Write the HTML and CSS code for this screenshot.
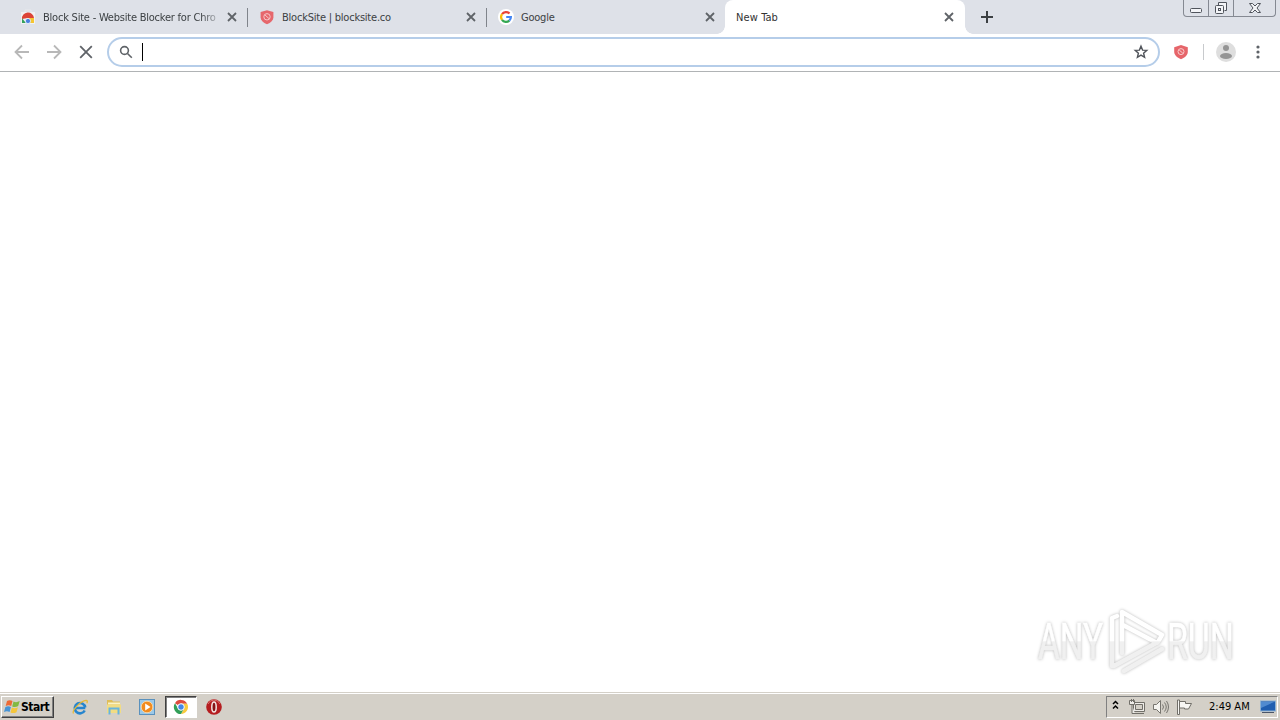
FILE: index.html
```html
<!DOCTYPE html>
<html lang="en">
<head>
    <meta charset="UTF-8">
    <meta name="viewport" content="width=device-width, initial-scale=1.0">
    <title>New Tab</title>
    <link rel="stylesheet" href="styles.css">
</head>
<body>
    <div class="tab-strip">
        <div class="tab">
            <svg class="favicon" viewBox="0 0 16 16">
                <path d="M1 3h14v12H1z" fill="#f1f1f2"/>
                <path d="M5 3V1h6v2" fill="none" stroke="#e8e9ec"/>
                <path d="M2 10a6 6 0 0 1 12-1H8z" fill="#dc4437"/>
                <path d="M2 9.200 6 14H2z" fill="#35a25a"/>
                <path d="M8.500 9H14v5h-4z" fill="#f5c532"/>
                <circle cx="8" cy="12" r="2.600" fill="#4a80df" stroke="#fff" stroke-width=".7"/>
            </svg>
            <span class="tab-title fade">Block Site - Website Blocker for Chro</span>
            <svg class="close" viewBox="0 0 10 10"><path d="M1 1l8 8M9 1L1 9"/></svg>
        </div>
        <div class="tab">
            <svg class="favicon" viewBox="0 0 16 16">
                <path d="M8 1.200 14.400 3v5.200c0 3-2.500 5.400-6.400 7-3.900-1.600-6.400-4-6.400-7V3z" fill="#e6676c"/>
                <circle cx="8" cy="7.800" r="3.200" fill="none" stroke="#f8c5c7"/>
                <path d="M6 6l4 3.600" stroke="#f8c5c7"/>
            </svg>
            <span class="tab-title">BlockSite | blocksite.co</span>
            <svg class="close" viewBox="0 0 10 10"><path d="M1 1l8 8M9 1L1 9"/></svg>
        </div>
        <div class="tab last">
            <svg class="favicon" viewBox="0 0 16 16">
                <circle cx="8" cy="8" r="8" fill="#fff"/>
                <g fill="none" stroke-width="2.200">
                    <path d="M4 5.200A4.900 4.900 0 0 1 11.500 4.500" stroke="#ea4335"/>
                    <path d="M4 5.200a4.900 4.900 0 0 0 0 5.600" stroke="#fbbc05"/>
                    <path d="M4 10.800a4.900 4.900 0 0 0 7.300.8" stroke="#34a853"/>
                    <path d="M8.200 8h4.700a4.900 4.900 0 0 1-1.600 3.600" stroke="#4285f4"/>
                </g>
            </svg>
            <span class="tab-title">Google</span>
            <svg class="close" viewBox="0 0 10 10"><path d="M1 1l8 8M9 1L1 9"/></svg>
        </div>
        <div class="tab active">
            <span class="tab-title">New Tab</span>
            <svg class="close" viewBox="0 0 10 10"><path d="M1 1l8 8M9 1L1 9"/></svg>
        </div>
        <svg class="new-tab" viewBox="0 0 12 12"><path d="M6 0v12M0 6h12"/></svg>
        <div class="window-buttons">
            <span class="win-btn min">
                <svg width="14" height="16" viewBox="0 0 14 16"><rect x="1.500" y="8.500" width="11" height="4" rx="1"/></svg>
            </span>
            <span class="win-btn restore">
                <svg width="14" height="16" viewBox="0 0 14 16">
                    <path d="M4.500 5.500v-3h8v8h-2"/>
                    <rect x="1.500" y="5.500" width="8" height="8" rx="1"/>
                    <rect x="4.500" y="8.500" width="2" height="2"/>
                </svg>
            </span>
            <span class="win-btn shut">
                <svg width="14" height="16" viewBox="0 0 14 16"><path d="M1.500 3.500h3L7 6l2.500-2.500h3L9 8l3.500 4.500h-3L7 10l-2.500 2.500h-3L5 8z"/></svg>
            </span>
        </div>
    </div>

    <div class="toolbar">
        <svg class="nav" viewBox="0 0 16 16"><path d="M15 8H2M8 1.500 1.500 8 8 14.500"/></svg>
        <svg class="nav" viewBox="0 0 16 16"><path d="M1 8h13M8 1.500 14.500 8 8 14.500"/></svg>
        <svg class="nav stop" viewBox="0 0 16 16"><path d="M2.200 2.200l11.600 11.600M13.800 2.200 2.200 13.800"/></svg>
        <div class="omnibox">
            <svg class="search" viewBox="0 0 14 14"><circle cx="5.500" cy="5.500" r="3.900"/><path d="M8.500 8.500l4.300 4.300"/></svg>
            <span class="caret"></span>
            <svg class="star" viewBox="0 0 16 16"><path d="M8 2.200l1.600 3.900 4.200.3-3.200 2.800 1 4.100L8 11.100l-3.600 2.200 1-4.100-3.200-2.800 4.200-.3z"/></svg>
        </div>
        <svg class="shield" viewBox="0 0 16 16">
            <path d="M8 1 14.800 3.200v4.500c0 3.200-2.600 5.600-6.800 7.500-4.200-1.900-6.800-4.300-6.800-7.500V3.200z" fill="#e6656a"/>
            <circle cx="8" cy="7.600" r="3" fill="none" stroke="#f9cccd"/>
            <path d="M6.200 6l3.600 3.200" stroke="#f9cccd"/>
        </svg>
        <span class="divider"></span>
        <svg class="avatar" viewBox="0 0 20 20">
            <circle cx="10" cy="10" r="10" fill="#dedede"/>
            <circle cx="10" cy="6" r="3" fill="#949494"/>
            <ellipse cx="10" cy="14" rx="6" ry="3" fill="#949494"/>
        </svg>
        <svg class="menu" viewBox="0 0 4 14"><circle cx="2" cy="2" r="1.600"/><circle cx="2" cy="7" r="1.600"/><circle cx="2" cy="12" r="1.600"/></svg>
    </div>

    <div class="page">
        <svg class="watermark" viewBox="0 0 210 72">
            <defs>
                <linearGradient id="fade" x1="0" y1="0" x2="0" y2="72" gradientUnits="userSpaceOnUse">
                    <stop offset=".5" stop-color="#fff"/>
                    <stop offset=".51" stop-color="#f0f0f0"/>
                </linearGradient>
            </defs>
            <text x="7" y="54" textLength="65" lengthAdjust="spacingAndGlyphs">ANY</text>
            <g class="mark">
                <path d="M86 11l-5 2v48M91 48V7l40 23M92 20l34 18M83 61l44-24 4-7M93 66l38-22"/>
            </g>
            <text x="136" y="54" textLength="67" lengthAdjust="spacingAndGlyphs">RUN</text>
        </svg>
    </div>

    <div class="taskbar">
        <div class="start">
            <svg width="17" height="16" viewBox="0 0 17 16">
                <path d="M3 2c2-1.300 3.800-1 5.500 0L7.200 7C5.400 6 3.700 6 1.700 7z" fill="#ed6a35"/>
                <path d="M9.500 2.500c2 1 4 .8 6.200-.5l-1.500 5c-2 1.200-4 1.400-6 .4z" fill="#82b943"/>
                <path d="M1.400 8c2-1.200 3.800-1 5.500 0l-1.300 5C3.800 12 2 12 0 13z" fill="#4794d5"/>
                <path d="M7.900 8.500c2 1 4 .8 6-.3l-1.400 5c-2 1-4 1.200-6 .2z" fill="#f5c63c"/>
            </svg>
            <b>Start</b>
        </div>
        <div class="launch">
            <svg width="16" height="16" viewBox="0 0 16 16">
                <path d="M13.300 9H3.500M12.700 11.500A5.200 5.200 0 1 1 13.200 8.500" fill="none" stroke="#2685ce" stroke-width="2.600"/>
                <path d="M1.500 14.500C-.5 11.500 9 1.500 14 1.300c1.600 0 1.500 1.400.8 3" fill="none" stroke="#e6b936" stroke-width="1.300"/>
            </svg>
        </div>
        <div class="launch">
            <svg width="16" height="16" viewBox="0 0 16 16">
                <path d="M1 1h5l1 1.500h7V13H1z" fill="#dfbd58"/>
                <path d="M2 3.500h12v2H2z" fill="#faf3c6"/>
                <path d="M1 5.500h14V14H1z" fill="#f2dc83"/>
                <path d="M3.500 15.500V9.500h9v6" fill="none" stroke="#67b4dd" stroke-width="2"/>
            </svg>
        </div>
        <div class="launch">
            <svg width="16" height="16" viewBox="0 0 16 16">
                <rect x=".5" y=".5" width="15" height="15" fill="#9cc9e8" stroke="#5a91bd"/>
                <circle cx="8" cy="8" r="5.800" fill="#f18b1e" stroke="#fbd39d"/>
                <path d="M6.200 4.500 11.500 8l-5.300 3.500z" fill="#fff"/>
            </svg>
        </div>
        <div class="launch pressed">
            <svg width="16" height="16" viewBox="0 0 16 16">
                <path d="M8 8 2 4.200A7 7 0 0 1 14.200 4.700H8z" fill="#dd4b3e"/>
                <path d="M8 8V4.700h6.200A7 7 0 0 1 8 15l3-5z" fill="#f8ca3e"/>
                <path d="M2 4.200 5.200 9.700 8 11l2.800-1L8 15A7 7 0 0 1 2 4.200z" fill="#329f58"/>
                <circle cx="8" cy="8" r="3.300" fill="#4387e8" stroke="#fff"/>
            </svg>
        </div>
        <div class="launch">
            <svg width="16" height="16" viewBox="0 0 16 16">
                <circle cx="8" cy="8" r="7.800" fill="#b51d20"/>
                <path d="M2 5a6.500 6.500 0 0 1 12 0" fill="none" stroke="#d97370"/>
                <ellipse cx="8" cy="8" rx="2.200" ry="5" fill="#851315" stroke="#f3e7e5" stroke-width="1.500"/>
            </svg>
        </div>
        <div class="tray">
            <svg class="chevrons" width="7" height="10" viewBox="0 0 7 10"><path d="M1 4l2.500-2.500L6 4M1 8.500 3.500 6 6 8.500"/></svg>
            <svg class="network" width="17" height="16" viewBox="0 0 17 16" fill="#eeece8" stroke="#716f69">
                <path d="M4.500 3.500h11v9h-11zM6 14.500h9"/>
                <path d="M6.500 5.500h7v5h-7z" fill="#d4d0c8"/>
                <path d="M.5 1.500h5v4h-5zM2.500 0v3M4.500 0v3M3 6v8.500h3"/>
            </svg>
            <svg width="17" height="16" viewBox="0 0 17 16" fill="none" stroke="#77756f">
                <path d="M1.500 5.500h3l4-4v13l-4-4h-3z" fill="#f5f4f0"/>
                <path d="M10.500 5.500q2 2.500 0 5M12.500 3.500q3.500 4.500 0 9M14.500 2q4 6 0 12"/>
            </svg>
            <svg width="16" height="16" viewBox="0 0 16 16" stroke="#716f69" fill="#f7f6f3">
                <path d="M1.500 1v14.500h2V1z"/>
                <path d="M3.500 2.500h6v2h6l-3 5.500h-4V9h-5z"/>
            </svg>
            <span class="clock">2:49 AM</span>
            <svg class="desktop" width="16" height="14" viewBox="0 0 16 14">
                <rect x=".5" y="1" width="15" height="10" fill="#205eb0" stroke="#8bb0d3"/>
                <path d="M1 2h13L1 8z" fill="#518bd0"/>
                <path d="M2 12.500h12" stroke="#4a5568"/>
            </svg>
        </div>
    </div>
</body>
</html>
```

FILE: styles.css
```css
* {
    box-sizing: border-box;
}

body {
    margin: 0;
    height: 100vh;
    display: flex;
    flex-direction: column;
    overflow: hidden;
    background: #fff;
    font-family: "DejaVu Sans Condensed", "DejaVu Sans", sans-serif;
    font-size: 11px;
    color: #3c4043;
}

svg {
    display: block;
    flex: none;
}

.tab-strip {
    height: 34px;
    flex: none;
    display: flex;
    padding-left: 9px;
    background: #dee1e8;
}

.tab {
    width: 239px;
    height: 34px;
    flex: none;
    display: flex;
    align-items: center;
    padding: 0 11px;
    background: linear-gradient(#80848b, #80848b) right 0 top 8px / 1px 19px no-repeat;
}

.tab.last {
    background: none;
}

.tab.active {
    position: relative;
    width: 240px;
    margin-left: -1px;
    background: #fff;
    border-radius: 8px 8px 0 0;
    color: #333;
}

.tab.active::before,
.tab.active::after {
    content: "";
    position: absolute;
    bottom: 0;
    width: 8px;
    height: 8px;
}

.tab.active::before {
    left: -8px;
    background: radial-gradient(circle at 0 0, transparent 7.5px, #fff 8px);
}

.tab.active::after {
    right: -8px;
    background: radial-gradient(circle at 100% 0, transparent 7.5px, #fff 8px);
}

.favicon {
    width: 16px;
    height: 16px;
    margin-right: 7px;
}

.tab-title {
    flex: 1;
    padding-top: 1px;
    white-space: nowrap;
    line-height: 16px;
    letter-spacing: -.22px;
}

.active .tab-title {
    letter-spacing: .1px;
}

.fade {
    -webkit-mask-image: linear-gradient(to right, #000 158px, transparent 180px);
    mask-image: linear-gradient(to right, #000 158px, transparent 180px);
}

.close {
    width: 10px;
    height: 10px;
    fill: none;
    stroke: #5f6368;
    stroke-width: 1.8;
}

.new-tab {
    width: 12px;
    height: 12px;
    margin: 11px 0 0 16px;
    stroke: #3c4043;
    stroke-width: 2;
}

.window-buttons {
    display: flex;
    height: 17px;
    margin: 0 4px 0 auto;
    border: 1px solid #858992;
    border-top: 0;
    border-radius: 0 0 4px 4px;
}

.win-btn {
    display: flex;
    justify-content: center;
    fill: #f3f4f7;
    stroke: #50545c;
}

.min {
    width: 25px;
    border-right: 1px solid #858992;
}

.restore {
    width: 25px;
    border-right: 1px solid #858992;
}

.shut {
    width: 41px;
}

.toolbar {
    height: 38px;
    flex: none;
    display: flex;
    align-items: center;
    padding: 0 20px 2px 14px;
    border-bottom: 1px solid #b0b3b5;
}

.nav {
    width: 16px;
    height: 16px;
    margin-right: 16px;
    fill: none;
    stroke: #b8b8b8;
    stroke-width: 1.8;
}

.stop {
    margin-right: 13px;
    stroke: #5f6368;
}

.omnibox {
    flex: 1;
    height: 30px;
    display: flex;
    align-items: center;
    padding: 0 9px 0 10px;
    border: 2px solid #b5cde9;
    border-radius: 15px;
}

.search {
    width: 14px;
    height: 14px;
    fill: none;
    stroke: #5f6368;
    stroke-width: 1.6;
}

.caret {
    width: 1px;
    height: 18px;
    margin-left: 9px;
    background: #000;
}

.star {
    width: 16px;
    height: 16px;
    margin-left: auto;
    fill: none;
    stroke: #50545a;
    stroke-width: 1.4;
}

.shield {
    width: 16px;
    height: 16px;
    margin-left: 13px;
}

.divider {
    width: 1px;
    height: 16px;
    margin: 0 12px 0 14px;
    background: #c8cacd;
}

.avatar {
    width: 20px;
    height: 20px;
}

.menu {
    width: 4px;
    height: 14px;
    margin-left: 20px;
    fill: #5f6368;
}

.page {
    flex: 1;
    display: flex;
    justify-content: flex-end;
    align-items: flex-end;
    padding: 0 39px 15px 0;
}

.watermark {
    width: 210px;
    height: 72px;
    overflow: visible;
    filter: drop-shadow(0 0 1.5px rgba(0, 0, 0, .28));
}

.watermark text {
    font-family: Roboto, sans-serif;
    font-size: 50px;
    fill: url(#fade);
    stroke: url(#fade);
    stroke-width: .6;
}

.mark {
    fill: none;
    stroke: url(#fade);
    stroke-width: 4.5;
    stroke-linecap: round;
    stroke-linejoin: round;
}

.taskbar {
    height: 28px;
    flex: none;
    display: flex;
    align-items: center;
    padding: 0 2px 0 1px;
    background: #d4d0c8;
    border-top: 1px solid #d4d0c8;
    box-shadow: inset 0 1px #fff;
    color: #000;
}

.start {
    width: 53px;
    height: 22px;
    display: flex;
    align-items: center;
    margin-right: 10px;
    padding-left: 2px;
    border: 1px solid;
    border-color: #fff #404040 #404040 #fff;
    box-shadow: inset -1px -1px #808080;
}

.start b {
    font-size: 12px;
    letter-spacing: -.5px;
}

.launch {
    width: 32px;
    height: 22px;
    display: flex;
    align-items: center;
    justify-content: center;
    margin-right: 1.6px;
}

.pressed {
    background: #fff;
    border: 1px solid;
    border-color: #404040 #fff #fff #404040;
    box-shadow: inset 1px 1px #808080;
}

.tray {
    height: 22px;
    width: 172px;
    display: flex;
    align-items: center;
    margin-left: auto;
    padding-left: 5px;
    gap: 7px;
    border: 1px solid;
    border-color: #808080 #fff #fff #808080;
}

.chevrons {
    margin-top: -3px;
    fill: none;
    stroke: #000;
    stroke-width: 1.5;
}

.network {
    margin: 0 -1px 0 3px;
}

.clock {
    margin-left: 10px;
    white-space: nowrap;
}

.desktop {
    margin: 0 1px 0 auto;
}
```
